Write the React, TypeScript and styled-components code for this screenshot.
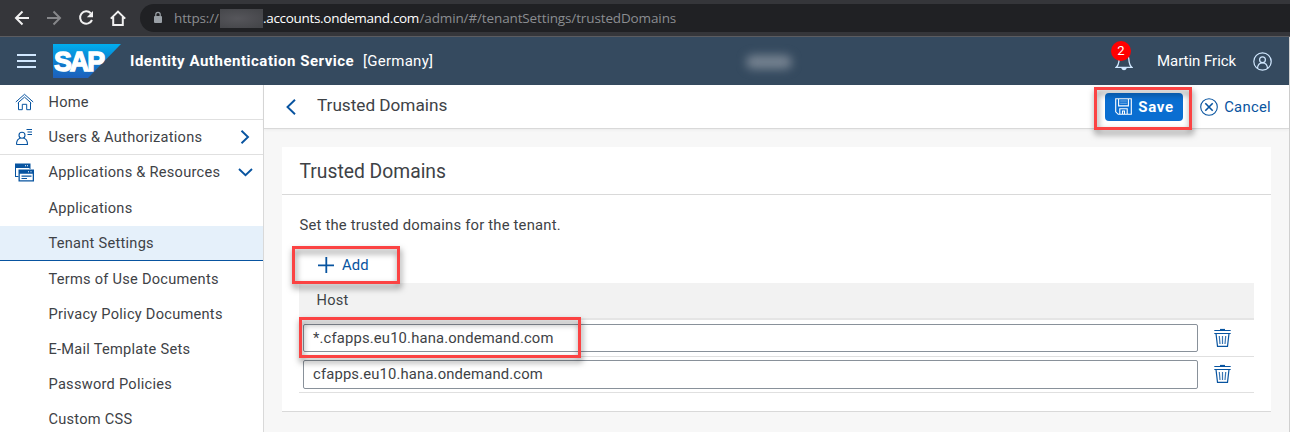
import React from "react";
import styled, { createGlobalStyle } from "styled-components";

const BLUE = "#0854a0";
const TEXT = "#3e4246";

const GlobalStyle = createGlobalStyle`
  * { box-sizing: border-box; }
  html, body { margin: 0; overflow: hidden; }
  body { font-family: Roboto, "Liberation Sans", sans-serif; color: ${TEXT}; }
  svg { display: block; flex: none; }
`;

const Page = styled.div`
  display: flex;
  flex-direction: column;
  width: 1290px;
  height: 432px;
  overflow: hidden;
  background: #d0d0d0;
`;

const BrowserBar = styled.div`
  display: flex;
  flex: none;
  height: 37px;
  padding: 4px 0 4px 14px;
  background: #35363a;
  border-bottom: 1px solid #5b5c60;
`;

const BrowserButtons = styled.div`
  display: flex;
  align-items: center;
  gap: 16px;
  width: 126px;
`;

const AddressField = styled.div`
  display: flex;
  align-items: center;
  flex: 1;
  height: 28px;
  padding-left: 13px;
  background: #202124;
  border-radius: 14px 0 0 14px;
`;

const Url = styled.div`
  display: flex;
  align-items: center;
  margin-left: 11px;
  font: 13.5px/20px "Open Sans", sans-serif;
  white-space: nowrap;
`;

const UrlPart = styled.span<{ $strong?: boolean; $width: number; $spacing: number }>`
  width: ${(p) => p.$width}px;
  color: ${(p) => (p.$strong ? "#fff" : "#8b8d91")};
  letter-spacing: ${(p) => p.$spacing}px;
`;

const UrlMask = styled.span`
  width: 43px;
  height: 19px;
  background: radial-gradient(ellipse at 40% 50%, #56565b, #45464a 85%);
`;

const Shell = styled.div`
  display: flex;
  flex-direction: column;
  flex: 1;
  width: 1289px;
  min-height: 0;
  background: #f7f7f7;
`;

const ShellHeader = styled.header`
  display: flex;
  align-items: center;
  flex: none;
  height: 48px;
  padding: 0 17px;
  background: #354a5f;
  color: #fff;
  font-size: 15px;
  white-space: nowrap;
`;

const Logo = styled.div`
  margin: 0 9px 0 17px;
`;

const ProductName = styled.span`
  width: 233px;
  font-weight: 700;
  letter-spacing: 0.52px;
`;

const Region = styled.span`
  width: 383px;
  letter-spacing: 0.26px;
`;

const TenantMask = styled.div`
  width: 46px;
  height: 14px;
  margin-top: 1px;
  border-radius: 7px;
  background: #758290;
  filter: blur(5px);
`;

const HeaderActions = styled.div`
  display: flex;
  align-items: center;
  margin-left: auto;
`;

const BellWrap = styled.div`
  position: relative;
  margin-right: 24px;
`;

const Badge = styled.span`
  position: absolute;
  left: -4px;
  top: -10px;
  width: 20px;
  height: 20px;
  border-radius: 50%;
  background: #f00;
  font-size: 13px;
  line-height: 20px;
  text-align: center;
`;

const UserName = styled.span`
  width: 96px;
  letter-spacing: -0.03px;
`;

const Body = styled.div`
  display: flex;
  flex: 1;
  min-height: 0;
`;

const Sidebar = styled.nav`
  flex: none;
  width: 264px;
  background: #fff;
  border-right: 1px solid #d9d9d9;
`;

const NavItem = styled.div<{ $divider?: boolean; $selected?: boolean; $sub?: boolean }>`
  display: flex;
  align-items: center;
  height: 35.2px;
  padding: ${(p) => (p.$sub ? 1.2 : 0)}px 10px 0 15px;
  border-bottom: 1px solid
    ${(p) => (p.$selected ? BLUE : p.$divider ? "#e0e0e0" : "transparent")};
  background: ${(p) => (p.$selected ? "#e5f0fa" : "transparent")};
  font-size: 14.6px;
  letter-spacing: 0.26px;
  white-space: nowrap;
`;

const NavIcon = styled.span`
  width: 33.5px;
`;

const NavLabel = styled.span`
  flex: 1;
`;

const Content = styled.main`
  flex: 1;
  min-width: 0;
`;

const PageHeader = styled.div`
  display: flex;
  align-items: center;
  height: 44px;
  padding: 0 18px 0 20.5px;
  background: #fff;
  border-bottom: 1px solid #d9d9d9;
  box-shadow: 0 1px 3px rgba(0, 0, 0, 0.05);
`;

const PageTitle = styled.h1`
  margin: 0 auto 3px 20.5px;
  font-size: 17.2px;
  font-weight: 400;
  letter-spacing: -0.02px;
`;

const Marked = styled.div`
  position: relative;
`;

const Mark = styled.div<{ $left: number; $top: number; $width: number; $height: number }>`
  position: absolute;
  z-index: 2;
  left: ${(p) => p.$left}px;
  top: ${(p) => p.$top}px;
  width: ${(p) => p.$width}px;
  height: ${(p) => p.$height}px;
  border: 3px solid #fb4343;
  filter: drop-shadow(1px 4px 3px rgba(0, 0, 0, 0.5));
  pointer-events: none;
`;

const SaveButton = styled.button`
  display: flex;
  align-items: center;
  gap: 6px;
  width: 78px;
  height: 28px;
  padding: 0 0 0 10px;
  border: 0;
  border-radius: 4px;
  background: #0a6ed1;
  color: #fff;
  font: 700 15px Roboto, sans-serif;
  letter-spacing: 0.75px;
`;

const TextButton = styled.button<{ $gap: number; $spacing?: number }>`
  display: flex;
  align-items: center;
  gap: ${(p) => p.$gap}px;
  padding: 0;
  border: 0;
  background: none;
  color: ${BLUE};
  font: 14.8px Roboto, sans-serif;
  letter-spacing: ${(p) => p.$spacing ?? 0.1}px;
`;

const CancelSlot = styled.div`
  margin-left: 17px;
`;

const Card = styled.section`
  width: 989px;
  height: 265px;
  margin: 18px 0 0 18px;
  background: #fff;
  border-bottom: 1px solid #d9d9d9;
`;

const CardTitle = styled.h2`
  height: 48px;
  margin: 0;
  padding-left: 17.5px;
  border-bottom: 1px solid #d9d9d9;
  font-size: 19.3px;
  font-weight: 400;
  line-height: 50px;
`;

const CardBody = styled.div`
  padding: 20px 17px 0;
`;

const Description = styled.p`
  margin: 0;
  height: 20px;
  padding-left: 0.5px;
  font-size: 14.8px;
  line-height: 20px;
  letter-spacing: 0.2px;
`;

const Toolbar = styled(Marked)`
  display: flex;
  align-items: center;
  height: 48px;
  padding: 12px 0 0 19px;
`;

const TableHead = styled.div`
  height: 37px;
  padding-left: 17.5px;
  background: #f2f2f2;
  border-bottom: 2px solid #e5e5e5;
  font-size: 14.6px;
  line-height: 34px;
  letter-spacing: 0.26px;
`;

const TableRow = styled(Marked)<{ $first?: boolean }>`
  display: flex;
  align-items: flex-start;
  height: ${(p) => (p.$first ? 37 : 36)}px;
  padding: ${(p) => (p.$first ? 4 : 3)}px 23px 0 4px;
  border-bottom: 1px solid #e0e0e0;
`;

const HostInput = styled.div<{ $height: number }>`
  width: 895px;
  height: ${(p) => p.$height}px;
  margin-right: 16px;
  padding-left: 9px;
  border: 1px solid #89919a;
  border-radius: 2px;
  background: #fff;
  font-size: 14.8px;
  line-height: 26px;
  letter-spacing: 0.16px;
`;

const TrashSlot = styled.span`
  padding-top: 4px;
`;

const BackArrow = ({ forward }: { forward?: boolean }) => (
  <svg width="16" height="16" viewBox="0 0 16 16" fill="none" stroke={forward ? "#86878a" : "#f1f1f1"} strokeWidth="2" transform={forward ? "scale(-1 1)" : undefined}>
    <path d="M15 8H2.500M8.500 1.500 2 8l6.500 6.500" />
  </svg>
);

const Reload = () => (
  <svg width="16" height="16" viewBox="0 0 16 16" fill="none" stroke="#f1f1f1" strokeWidth="2">
    <path d="M12.800 3.200A6.200 6.200 0 1 0 14 10" />
    <path d="M15 1v6.200H8.800Z" fill="#f1f1f1" stroke="none" />
  </svg>
);

const BrowserHome = () => (
  <svg width="16" height="16" viewBox="0 0 16 16" fill="none" stroke="#f1f1f1" strokeWidth="2">
    <path d="M.8 8.600 8 1.600l7.200 7M3.200 7v8h9.600V7" />
  </svg>
);

const Lock = () => (
  <svg width="10" height="14" viewBox="0 0 10 14">
    <rect x="1" y="5" width="8" height="7" rx="1" fill="#9aa0a6" />
    <path d="M2.800 5.500V3.500a2.200 2.200 0 0 1 4.400 0v2" fill="none" stroke="#9aa0a6" strokeWidth="1.200" />
  </svg>
);

const Menu = () => (
  <svg width="19" height="14" viewBox="0 0 19 14" stroke="#d1e8ff" strokeWidth="2">
    <path d="M0 1h19M0 7h19M0 13h19" />
  </svg>
);

const SapLogo = () => (
  <svg width="68" height="34" viewBox="0 0 68 34">
    <defs>
      <linearGradient id="sap" x1="0" y1="0" x2="0" y2="1">
        <stop offset="0" stopColor="#00aeef" />
        <stop offset="0.5" stopColor="#0d80d0" />
        <stop offset="1" stopColor="#1e5fbb" />
      </linearGradient>
    </defs>
    <path d="M0 0h68L35 34H0Z" fill="url(#sap)" />
    <text x="1" y="27" fill="#fff" stroke="#fff" strokeWidth="1.400" fontFamily="Liberation Sans, sans-serif" fontWeight="700" fontSize="27.500" textLength="49" letterSpacing="-2" lengthAdjust="spacingAndGlyphs">SAP</text>
  </svg>
);

const Bell = () => (
  <svg width="18" height="20" viewBox="0 0 18 20" fill="none" stroke="#d1e8ff" strokeWidth="1.300">
    <path d="M1.200 16.300c2.600-2 2.700-4.500 3-8.300C4.500 4 6.500 2.500 9 2.500S13.500 4 13.800 8c.3 3.800.4 6.300 3 8.300Z" />
    <path d="M6.200 17h5.600Q11 19.300 9 19.300T6.200 17Z" fill="#d1e8ff" stroke="none" />
  </svg>
);

const User = () => (
  <svg width="19" height="19" viewBox="0 0 19 19" fill="none" stroke="#d1e8ff" strokeWidth="1.200">
    <circle cx="9.500" cy="9.500" r="8.700" />
    <circle cx="9.500" cy="7.800" r="2.900" />
    <path d="M4.500 16.300c.2-3.700 2-5.500 5-5.500s4.800 1.800 5 5.500" />
  </svg>
);

const NavHome = () => (
  <svg width="19" height="18" viewBox="0 0 19 18" fill="none" stroke={BLUE} strokeWidth="1">
    <path d="M.8 9 9.500 1.300 18.200 9M2.800 10l6.700-5.900L16.200 10M3.500 9.500v7.200h3.800v-5.400h4.400v5.400h3.800V9.500" />
  </svg>
);

const NavUsers = () => (
  <svg width="19" height="18" viewBox="0 0 19 18" fill="none" stroke={BLUE} strokeWidth="1.100">
    <circle cx="7" cy="7.200" r="3" />
    <path d="M1.500 16.500c0-4 1.400-5.700 4-6.200M8.500 10.300c2.600.5 4 2.200 4 6.200H1.500M11.500 1.500H17M12.500 4H17M12.500 6.500H17" />
  </svg>
);

const NavApps = () => (
  <svg width="19" height="19" viewBox="0 0 19 19" fill={BLUE}>
    <path d="M0 .5h15.500v5.500h-1V5H1v8h2.500v1H0Z" />
    <path d="M3.500 6.500H19v12H3.500ZM4.800 10.800v6.400h12.900v-6.400Z" fillRule="evenodd" />
    <path d="M6.500 12.500h10v1.200h-10ZM6.500 15h5.500v1H6.500Z" />
    <path d="M10 2.300h1v1h-1ZM12 2.300h1v1h-1ZM13 8.300h1v1h-1ZM15.500 8.300h1v1h-1Z" fill="#fff" />
  </svg>
);

const Chevron = ({ kind }: { kind: "left" | "right" | "down" }) => {
  const d = { left: "M10 .8 2.500 8l7.500 7.200", right: "M2.500 1.800 9 8 2.500 14.200", down: "M1 2 7.500 8.200 14 2" }[kind];
  const [w, h] = kind === "down" ? [15, 10] : kind === "left" ? [12, 16] : [14, 16];
  return (
    <svg width={w} height={h} viewBox={`0 0 ${w} ${h}`} fill="none" stroke={BLUE} strokeWidth="1.900">
      <path d={d} />
    </svg>
  );
};

const SaveIcon = () => (
  <svg width="17" height="17" viewBox="0 0 17 17" fill="none" stroke="#fff" strokeWidth="1.100">
    <path d="M.7.7h15.600v15.600H3.200L.7 13.800ZM3.600.7v7.200h9.800V.7M4.800 16.300v-5.600h7.400v5.600M7.500 16v-3h2v3" />
    <path d="M5.200 3h6.600M5.200 5.300h6.600" strokeOpacity="0.45" />
  </svg>
);

const CancelIcon = () => (
  <svg width="18" height="18" viewBox="0 0 18 18" fill="none" stroke={BLUE}>
    <circle cx="9" cy="9" r="8.300" strokeWidth="1.100" />
    <path d="m5.300 5.300 7.400 7.400M12.700 5.300l-7.400 7.400" strokeWidth="1.600" />
  </svg>
);

const Plus = () => (
  <svg width="16" height="16" viewBox="0 0 16 16" stroke={BLUE} strokeWidth="1.800">
    <path d="M8.300 0v16M0 8.300h16" />
  </svg>
);

const Trash = () => (
  <svg width="17" height="19" viewBox="0 0 17 19" fill="none" stroke={BLUE}>
    <path d="M.3 2.500h16.400M.3 5.500h16.400" strokeWidth="1" />
    <path d="M6 1.500h5" strokeWidth="1.200" />
    <path d="M2 5.500 3.500 18.400h10L15 5.500" strokeWidth="1.200" />
    <path d="M5.300 8 6 16M8.500 8v8M11.700 8 11 16" strokeWidth="1.200" strokeOpacity="0.8" />
  </svg>
);

const subItems = ["Applications", "Tenant Settings", "Terms of Use Documents", "Privacy Policy Documents", "E-Mail Template Sets", "Password Policies", "Custom CSS"];

export default function App() {
  return (
    <Page>
      <GlobalStyle />
      <BrowserBar>
        <BrowserButtons>
          <BackArrow />
          <BackArrow forward />
          <Reload />
          <BrowserHome />
        </BrowserButtons>
        <AddressField>
          <Lock />
          <Url>
            <UrlPart $width={46} $spacing={-0.15}>https://</UrlPart>
            <UrlMask />
            <UrlPart $strong $width={156.5} $spacing={-0.31}>.accounts.ondemand.com</UrlPart>
            <UrlPart $width={256} $spacing={-0.13}>/admin/#/tenantSettings/trustedDomains</UrlPart>
          </Url>
        </AddressField>
      </BrowserBar>
      <Shell>
        <ShellHeader>
          <Menu />
          <Logo><SapLogo /></Logo>
          <ProductName>Identity Authentication Service</ProductName>
          <Region>[Germany]</Region>
          <TenantMask />
          <HeaderActions>
            <BellWrap>
              <Bell />
              <Badge>2</Badge>
            </BellWrap>
            <UserName>Martin Frick</UserName>
            <User />
          </HeaderActions>
        </ShellHeader>
        <Body>
          <Sidebar>
            <NavItem $divider>
              <NavIcon><NavHome /></NavIcon>
              <NavLabel>Home</NavLabel>
            </NavItem>
            <NavItem $divider>
              <NavIcon><NavUsers /></NavIcon>
              <NavLabel>Users &amp; Authorizations</NavLabel>
              <Chevron kind="right" />
            </NavItem>
            <NavItem>
              <NavIcon><NavApps /></NavIcon>
              <NavLabel>Applications &amp; Resources</NavLabel>
              <Chevron kind="down" />
            </NavItem>
            {subItems.map((label) => (
              <NavItem key={label} $sub $selected={label === "Tenant Settings"}>
                <NavIcon />
                <NavLabel>{label}</NavLabel>
              </NavItem>
            ))}
          </Sidebar>
          <Content>
            <PageHeader>
              <Chevron kind="left" />
              <PageTitle>Trusted Domains</PageTitle>
              <Marked>
                <SaveButton><SaveIcon />Save</SaveButton>
                <Mark $left={-11} $top={-6} $width={98} $height={43} />
              </Marked>
              <CancelSlot>
                <TextButton $gap={6} $spacing={0.3}><CancelIcon />Cancel</TextButton>
              </CancelSlot>
            </PageHeader>
            <Card>
              <CardTitle>Trusted Domains</CardTitle>
              <CardBody>
                <Description>Set the trusted domains for the tenant.</Description>
                <Toolbar>
                  <TextButton $gap={8}><Plus />Add</TextButton>
                  <Mark $left={-7} $top={11} $width={108} $height={38} />
                </Toolbar>
                <TableHead>Host</TableHead>
                <TableRow $first>
                  <HostInput $height={28}>*.cfapps.eu10.hana.ondemand.com</HostInput>
                  <TrashSlot><Trash /></TrashSlot>
                  <Mark $left={0} $top={-3} $width={282} $height={41} />
                </TableRow>
                <TableRow>
                  <HostInput $height={29}>cfapps.eu10.hana.ondemand.com</HostInput>
                  <TrashSlot><Trash /></TrashSlot>
                </TableRow>
              </CardBody>
            </Card>
          </Content>
        </Body>
      </Shell>
    </Page>
  );
}
